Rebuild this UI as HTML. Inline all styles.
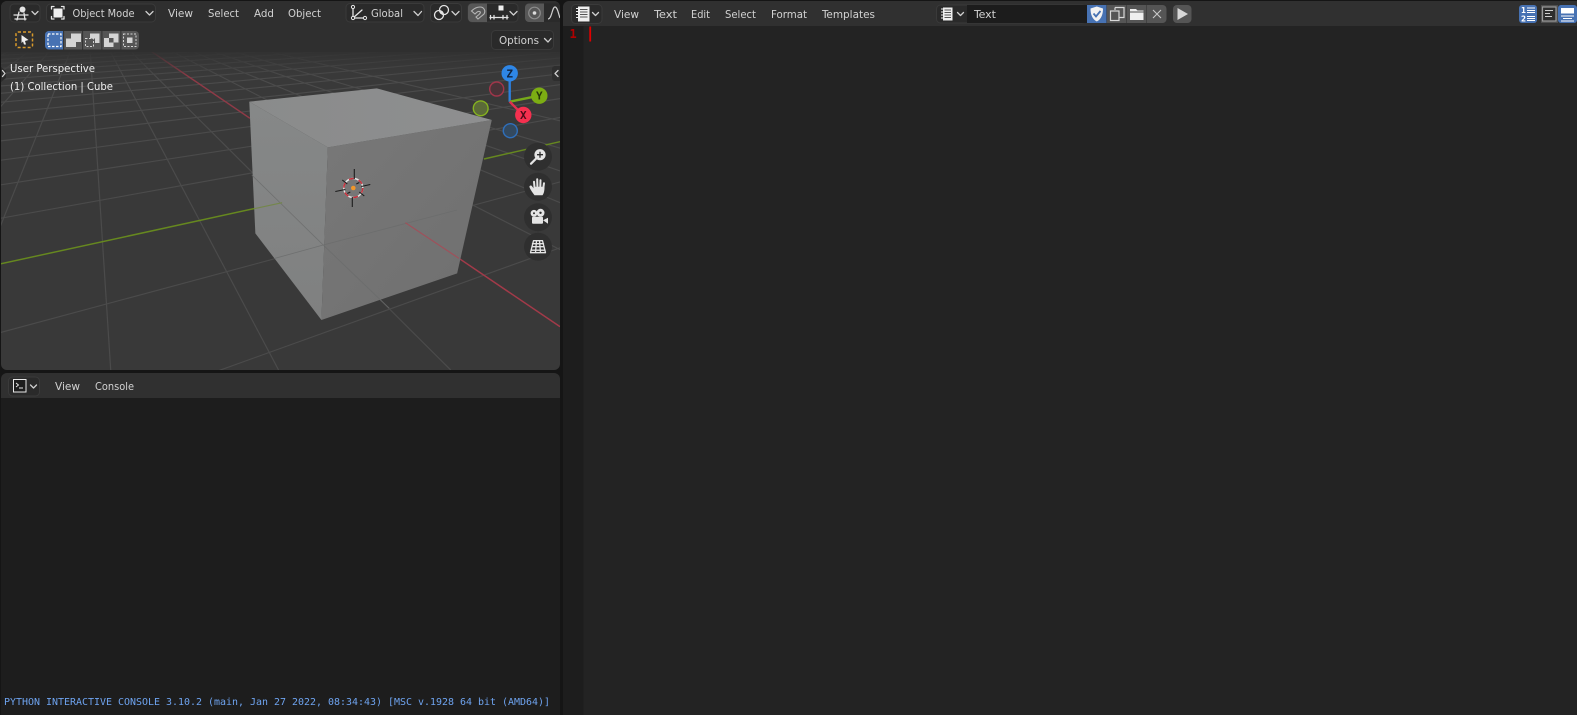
<!DOCTYPE html>
<html><head><meta charset="utf-8"><style>
html,body{margin:0;padding:0;background:#151515;width:1577px;height:715px;overflow:hidden}
svg{display:block}
text{font-family:"DejaVu Sans Condensed","DejaVu Sans","Liberation Sans",sans-serif;font-stretch:condensed;font-size:11px;fill:#d2d2d2}
.m{font-family:"DejaVu Sans Mono","Liberation Mono",monospace;font-stretch:normal}
.w{fill:#f0f0f0}
.c{fill:none;stroke:#cfcfcf;stroke-width:1.3;stroke-linecap:round;stroke-linejoin:round}
.i{fill:none;stroke:#e4e4e4;stroke-width:1.3;stroke-linecap:round;stroke-linejoin:round}
.d{fill:#2a2a2a;stroke:#3a3a3a;stroke-width:1}
</style></head><body>
<svg width="1577" height="715" viewBox="0 0 1577 715" xmlns="http://www.w3.org/2000/svg">
<defs>
<clipPath id="vp"><rect x="1" y="1" width="559" height="369" rx="6"/></clipPath>
<linearGradient id="fade" x1="0" y1="0" x2="0" y2="1"><stop offset="0" stop-color="#303030" stop-opacity="1"/><stop offset="1" stop-color="#393939" stop-opacity="0"/></linearGradient>
<linearGradient id="lf" x1="0" y1="0" x2="0" y2="1"><stop offset="0" stop-color="#868888"/><stop offset="1" stop-color="#7f8080"/></linearGradient>
<linearGradient id="rf" x1="0" y1="0" x2="1" y2="1"><stop offset="0" stop-color="#787878"/><stop offset="1" stop-color="#6f6f6f"/></linearGradient>
<linearGradient id="tf" x1="0" y1="0" x2="1" y2="0"><stop offset="0" stop-color="#8a8b8b"/><stop offset="1" stop-color="#8e8f90"/></linearGradient>
</defs>

<!-- 3D viewport -->
<g clip-path="url(#vp)">
<rect x="0" y="0" width="560" height="370" fill="#393939"/>
<g transform="translate(0 50) scale(.35714 .33333)">
<g stroke="#4b4b4b" stroke-width="3.4" fill="none">
<path d="M0 1198L3600 -190M0 848L3600 -190M0 505L3600 -190M0 405L3600 -190M0 331L3600 -190M0 273L3600 -190M0 227L3600 -190M0 189L3600 -190M0 157L3600 -190M0 130L3600 -190M0 108L3600 -190M0 88L3600 -190M0 70L3600 -190M0 55L3600 -190M0 40L3600 -190M0 28L3600 -190M0 16L3600 -190"/>
<path d="M245 -125L-1610 960M245 -125L-1130 960M245 -125L-650 960M245 -125L-160 960M245 -125L310 960M245 -125L780 960M245 -125L1262 960M245 -125L2228 960M245 -125L2708 960M245 -125L3188 960M245 -125L3668 960M245 -125L4500 960"/>
</g>
<path d="M425 5L700 205" stroke="#8f3a47" stroke-width="4.4" fill="none"/>
<path d="M0 642L715 475" stroke="#66881f" stroke-width="4.4" fill="none"/>
<path d="M1355 327L1568 275" stroke="#66881f" stroke-width="4.4" fill="none"/>
<path d="M1285 625L1568 830" stroke="#a23a49" stroke-width="4.4" fill="none"/>
<!-- cube -->
<polygon points="698,155 918,292 900,810 715,550" fill="url(#lf)"/>
<polygon points="918,292 1377,210 1280,670 900,810" fill="url(#rf)"/>
<polygon points="698,155 1055,115 1377,210 918,292" fill="url(#tf)"/>
<path d="M705 375L905 585L1090 775M770 625L905 585L1280 480" stroke="#6a6c6c" stroke-width="2.5" fill="none" opacity=".8"/>
<path d="M712 476L790 458" stroke="#74864c" stroke-width="3.5" fill="none"/>
<path d="M1135 518L1285 625" stroke="#a0505a" stroke-width="3.5" fill="none"/>
</g>
<rect x="0" y="50" width="560" height="28" fill="url(#fade)"/>
<!-- 3D cursor -->
<g transform="translate(353.3 188)">
<circle r="9.5" fill="none" stroke="#e8e8e8" stroke-width="1.4"/>
<circle r="9.5" fill="none" stroke="#c8303c" stroke-width="1.5" stroke-dasharray="5 5"/>
<g stroke="#1c1c1c" stroke-width="1.1"><path d="M1 -19V-9M-1 9V19M-18 3.5L-8 1.5M8 -1.5L17 -3.5M-11 -8L-6 -4M6 4L11 8M-6 5.5L-3 4M3 -4L6 -5.5"/></g>
<circle r="2.3" fill="#f0962a"/>
</g>
<!-- gizmo -->
<path d="M509.7 101.7V73" stroke="#2d7fdc" stroke-width="2.4"/>
<path d="M509.7 101.7L539 95.7" stroke="#76a81a" stroke-width="2.4"/>
<path d="M509.7 101.7L523 115" stroke="#e0314f" stroke-width="2.4"/>
<circle cx="496.7" cy="89" r="7" fill="#4a3338" stroke="#a3354a" stroke-width="1.4"/>
<circle cx="480.7" cy="108.3" r="7.4" fill="#5b6a38" stroke="#86b31f" stroke-width="1.4"/>
<circle cx="510.3" cy="130.7" r="7" fill="#33495f" stroke="#2f6fbb" stroke-width="1.4"/>
<circle cx="509.7" cy="73.3" r="8.2" fill="#2e86e6"/>
<circle cx="539.3" cy="95.7" r="8.2" fill="#7cad13"/>
<circle cx="523.3" cy="115" r="8.2" fill="#f5304f"/>
<text class="m" x="509.7" y="77.3" text-anchor="middle" style="font-size:11px;fill:#10233f;font-weight:bold">Z</text>
<text class="m" x="539.3" y="99.7" text-anchor="middle" style="font-size:11px;fill:#26360a;font-weight:bold">Y</text>
<text class="m" x="523.3" y="119" text-anchor="middle" style="font-size:11px;fill:#4a0b18;font-weight:bold">X</text>
<!-- nav buttons -->
<g fill="#2f2f2f">
<circle cx="538" cy="156.7" r="14"/><circle cx="538" cy="186.7" r="14"/><circle cx="538" cy="217.3" r="14"/><circle cx="538" cy="246.7" r="14"/>
</g>
<g transform="translate(538 156.7)">
<circle cx="2" cy="-2" r="5.6" fill="#e4e4e4"/>
<path d="M-2 2L-7 7" stroke="#e4e4e4" stroke-width="2.2" stroke-linecap="round"/>
<path d="M-1 -2H5M2 -5V1" stroke="#2c2c2c" stroke-width="1.3"/>
</g>
<g transform="translate(538 186.7)">
<path d="M-3 6.500L-4 -5M-0.500 3L-0.800 -7.500M2.200 3L2.500 -6.500M5 3.500L6 -3.500" stroke="#e4e4e4" stroke-width="2" stroke-linecap="round" fill="none"/>
<path d="M-3.500 8.500C-5.500 6 -7.500 3 -8.500 0.500C-9 -1 -7 -1.800 -6 -0.500L-4 2V0H6.500C6.500 4 6 6.500 4.500 8.500Z" fill="#e4e4e4"/>
</g>
<g transform="translate(538 217.3)" fill="#e4e4e4">
<circle cx="-4" cy="-4" r="3.4"/><circle cx="2.5" cy="-4.5" r="4"/>
<rect x="-6" y="-0.5" width="11" height="7" rx="1"/>
<path d="M5 3L10 0.5V6.5Z"/>
<circle cx="-4" cy="-4" r="1" fill="#2c2c2c"/><circle cx="2.5" cy="-4.5" r="1.2" fill="#2c2c2c"/>
</g>
<g transform="translate(538 246.7)">
<path class="i" stroke-width="1.1" d="M-4.5 -6H4.5L7.5 6H-7.5ZM-6 0H6M-7 3.5H7M-1.5 -6L-2.5 6M1.5 -6L2.5 6M-5.5 -3H5.500"/>
</g>
<!-- tabs -->
<path d="M1 67L6 71V78L1 82Z" fill="#2a2a2a"/><path d="M2.500 70.500L5 73.500L2.500 76.500" class="c" stroke-width="1"/>
<rect x="552" y="66" width="10" height="15" rx="3" fill="#2e2e2e"/><path d="M558 70.500L555 73.500L558 76.500" class="c"/>
<!-- overlay text -->
<text class="w" x="10" y="72" textLength="85" lengthAdjust="spacingAndGlyphs">User Perspective</text>
<text class="w" x="10" y="90" textLength="103" lengthAdjust="spacingAndGlyphs">(1) Collection | Cube</text>
<!-- header bg -->
<rect x="0" y="0" width="560" height="52" fill="#2f2f2f"/>
<!-- editor type -->
<rect class="d" x="10" y="4" width="30" height="18" rx="4"/>
<g transform="translate(14 6)"><path class="i" d="M0 9H14M1 13H12M5 6L3 14M10 7L11 14"/><circle cx="8.500" cy="3.500" r="3" fill="#e4e4e4"/></g>
<path class="c" d="M32 11.500L35 14.500L38 11.500"/>
<!-- mode -->
<rect class="d" x="46.500" y="4" width="109" height="18" rx="4"/>
<path class="i" d="M51.500 9V6.500H54M61.500 6.500H64V9M64 16.500V19H61.500M54 19H51.500V16.500"/>
<rect x="53.500" y="8.500" width="9" height="9" fill="#efefef"/>
<text x="72.500" y="17" textLength="62" lengthAdjust="spacingAndGlyphs">Object Mode</text>
<path class="c" d="M146 11.500L149.500 15L153 11.500"/>
<text x="168" y="17" textLength="25" lengthAdjust="spacingAndGlyphs">View</text><text x="208" y="17" textLength="31" lengthAdjust="spacingAndGlyphs">Select</text><text x="254" y="17" textLength="20" lengthAdjust="spacingAndGlyphs">Add</text><text x="288" y="17" textLength="33" lengthAdjust="spacingAndGlyphs">Object</text>
<!-- global -->
<rect class="d" x="346" y="3.500" width="78" height="18.500" rx="4"/>
<path class="i" d="M353 7V18H365M353 18L362 10"/>
<circle cx="353" cy="7" r="1.600" fill="#2a2a2a" stroke="#e4e4e4"/><circle cx="353" cy="18" r="1.600" fill="#2a2a2a" stroke="#e4e4e4"/><circle cx="365" cy="18" r="1.600" fill="#2a2a2a" stroke="#e4e4e4"/>
<text x="371" y="17" textLength="32" lengthAdjust="spacingAndGlyphs">Global</text>
<path class="c" d="M414 11.500L418 15.500L421.500 11.500"/>
<!-- link -->
<rect class="d" x="430.500" y="3.500" width="31" height="18.500" rx="4"/>
<circle cx="439" cy="15" r="4.500" class="i"/><circle cx="444" cy="10" r="4.500" class="i"/><circle cx="441.500" cy="12.500" r="1.500" fill="#e4e4e4"/>
<path class="c" d="M452 11.500L455.500 15L459 11.500"/>
<!-- snap -->
<rect class="d" x="468" y="3.500" width="50" height="18.500" rx="4"/>
<path d="M472 3.500H487V22H472A4 4 0 0 1 468 18V7.500A4 4 0 0 1 472 3.500Z" fill="#575757"/>
<path d="M478 19L484 14C486 11 484 7 480 7C477 7 474.500 8 471.500 11L475 14C477 12 478 11 479.500 11.500C481 12 480.500 13 479 14.500L476 17Z" fill="none" stroke="#b5b5b5" stroke-width="1.100"/>
<rect x="498.500" y="5.500" width="5" height="5" fill="#f0f0f0"/>
<path class="i" d="M490.500 15.500V19M494 15.500V19M503 15.500V19M507 15.500V19M490 17.500H508" stroke-width="1"/>
<path class="c" d="M510 11.500L513.500 15L517 11.500"/>
<!-- proportional -->
<path d="M529 3.500H544V22H529A4 4 0 0 1 525 18V7.500A4 4 0 0 1 529 3.500Z" fill="#575757"/>
<path d="M544 3.500H560V22H544Z" fill="#2a2a2a"/>
<circle cx="534.500" cy="13" r="5.800" fill="none" stroke="#8c8c8c" stroke-width="1.200"/><circle cx="534.500" cy="13" r="1.800" fill="#dcdcdc"/>
<path d="M548 19C552 19 552 7 555 7C557.500 7 558.500 14 560 18" fill="none" stroke="#cfcfcf" stroke-width="1.200"/>
<!-- tool row -->
<rect x="16" y="32" width="16.500" height="15.500" rx="2" fill="none" stroke="#d99a2b" stroke-width="1.500" stroke-dasharray="3 2"/>
<path d="M21.500 35L28.500 40L25 41L26 44.500L24 44.500L23 41.500L21.500 43Z" fill="#efefef"/>
<rect x="45" y="31" width="94" height="18.500" rx="4" fill="#555"/>
<path d="M49 31H63V49.500H49A4 4 0 0 1 45 45.500V35A4 4 0 0 1 49 31Z" fill="#4772b3"/>
<g fill="#262626"><rect x="63.300" y="31" width=".8" height="18.500"/><rect x="82.300" y="31" width=".8" height="18.500"/><rect x="101.500" y="31" width=".8" height="18.500"/><rect x="120.500" y="31" width=".8" height="18.500"/></g>
<rect x="48" y="34" width="13" height="12.500" fill="none" stroke="#fff" stroke-width="1.200" stroke-dasharray="2.500 1.500"/>
<path d="M66 38.500H71V33.500H81V42H76V47H66Z" fill="#d4d4d4"/>
<rect x="85.500" y="38.500" width="8" height="8" fill="none" stroke="#d4d4d4" stroke-dasharray="2 1.500"/><path d="M90 33.500H99.500V43H95V38.500H90Z" fill="#d4d4d4"/>
<path d="M104 38H109V33.500H118.500V42.500H113.500V47H104Z" fill="#d4d4d4"/><rect x="109" y="38" width="4.500" height="4.500" fill="#555"/>
<rect x="123.500" y="34" width="12.500" height="12.500" fill="none" stroke="#d4d4d4" stroke-dasharray="2 1.500"/><rect x="127" y="37.500" width="5.500" height="5.500" fill="#d4d4d4"/>
<!-- options -->
<rect class="d" x="491.500" y="30.500" width="62" height="19" rx="4"/>
<text x="499" y="44" textLength="40" lengthAdjust="spacingAndGlyphs">Options</text>
<path class="c" d="M544.500 38.500L548 42L551 38.500"/>
</g>

<!-- Console -->
<path d="M7 373H554A6 6 0 0 1 560 379V715H1V379A6 6 0 0 1 7 373Z" fill="#1d1d1d"/>
<path d="M7 373H554A6 6 0 0 1 560 379V398H1V379A6 6 0 0 1 7 373Z" fill="#303030"/>
<rect class="d" x="8.500" y="377" width="31" height="19" rx="4"/>
<rect x="13.500" y="379.500" width="12.500" height="12.500" fill="#1d1d1d" stroke="#e8e8e8" stroke-width="1"/>
<path d="M16 383L18.500 385L16 387M19 388H23" fill="none" stroke="#e8e8e8" stroke-width=".9"/>
<path class="c" d="M30.500 385L33.500 388L36.500 385"/>
<text x="55" y="390" textLength="25" lengthAdjust="spacingAndGlyphs">View</text><text x="95" y="390" textLength="39" lengthAdjust="spacingAndGlyphs">Console</text>
<text class="m" x="4" y="705" textLength="546" lengthAdjust="spacingAndGlyphs" style="font-size:10px;fill:#6ea3ef">PYTHON INTERACTIVE CONSOLE 3.10.2 (main, Jan 27 2022, 08:34:43) [MSC v.1928 64 bit (AMD64)]</text>

<!-- Text editor -->
<path d="M569 1H1577V715H563V7A6 6 0 0 1 569 1Z" fill="#232323"/>
<path d="M569 1H1577V26H563V7A6 6 0 0 1 569 1Z" fill="#303030"/>
<rect x="563" y="26" width="20.500" height="689" fill="#1d1d1d"/>
<rect x="589.300" y="26.500" width="1.800" height="15" fill="#e00000"/>
<text class="m" x="569.500" y="38" style="font-size:12px;fill:#b00000;font-weight:bold">1</text>
<rect class="d" x="571.500" y="4.500" width="30.500" height="19" rx="4"/>
<rect x="578" y="6.500" width="11.500" height="15" fill="#efefef"/><path d="M576 8.500H578M576 11.500H578M576 14.500H578M576 17.500H578" stroke="#efefef" stroke-width="1"/><path d="M580 9.500H587.500M580 12H587.500M580 14.500H587.500M580 17H587.500" stroke="#555" stroke-width="1"/>
<path class="c" d="M592.500 12.500L595.500 15.500L598.500 12.500"/>
<text x="614" y="18" textLength="25" lengthAdjust="spacingAndGlyphs">View</text><text x="654" y="18" textLength="23" lengthAdjust="spacingAndGlyphs">Text</text><text x="691" y="18" textLength="19" lengthAdjust="spacingAndGlyphs">Edit</text><text x="725" y="18" textLength="31" lengthAdjust="spacingAndGlyphs">Select</text><text x="771" y="18" textLength="36" lengthAdjust="spacingAndGlyphs">Format</text><text x="822" y="18" textLength="53" lengthAdjust="spacingAndGlyphs">Templates</text>
<!-- text datablock -->
<rect class="d" x="936.500" y="5" width="150" height="18" rx="4"/>
<rect x="967" y="5" width="120" height="18" fill="#1c1c1c"/>
<rect x="943" y="7.500" width="9.500" height="13" fill="#efefef"/><path d="M941 9H943M941 12H943M941 15H943M941 18H943" stroke="#efefef"/><path d="M944.500 10H951M944.500 12.500H951M944.500 15H951M944.500 17.500H951" stroke="#555"/>
<path class="c" d="M957.500 12.500L960.500 15.500L963.500 12.500"/>
<text x="974" y="18" textLength="22" lengthAdjust="spacingAndGlyphs">Text</text>
<rect x="1087" y="5" width="19.500" height="18" fill="#4772b3"/>
<path d="M1096.800 6.500L1103 8.500C1103 14 1101.500 19 1096.800 21.500C1092 19 1090.500 14 1090.500 8.500Z" fill="#f2f2f2"/>
<path d="M1093.500 13.500L1096 16.500L1100.500 11" fill="none" stroke="#4772b3" stroke-width="1.800"/>
<rect x="1107" y="5" width="19.500" height="18" fill="#555"/>
<path d="M1115 7.500H1124V17.500H1119.500M1115 7.500V10" fill="none" stroke="#d8d8d8" stroke-width="1.200"/><rect x="1110.500" y="11" width="8.500" height="9.500" fill="#555" stroke="#d8d8d8" stroke-width="1.200"/>
<rect x="1127" y="5" width="19.500" height="18" fill="#555"/>
<path d="M1130 9H1136L1137.500 10.500H1143.500V20H1130Z" fill="#efefef"/><path d="M1130 12H1143.500" stroke="#555"/>
<path d="M1151 5H1162.500A4 4 0 0 1 1166.500 9V19A4 4 0 0 1 1162.500 23H1147V5Z" fill="#555"/>
<path d="M1153 10L1161 18M1161 10L1153 18" stroke="#c8c8c8" stroke-width="1.100"/>
<rect x="1173" y="5" width="18.500" height="18" rx="4" fill="#555"/>
<path d="M1177.500 8L1188 14L1177.500 20Z" fill="#d8d8d8"/>
<!-- right toggles -->
<rect x="1519" y="5" width="18" height="18" rx="3" fill="#4772b3"/>
<text x="1521" y="13" style="font-size:8px;font-weight:bold;fill:#fff">1</text><text x="1521" y="21.500" style="font-size:8px;font-weight:bold;fill:#fff">2</text>
<path d="M1527 8H1535M1527 10.500H1535M1527 12.500H1535M1527 16.500H1535M1527 18.500H1535M1527 20.500H1535" stroke="#fff"/>
<rect x="1541" y="5" width="17" height="18" fill="#4f4f4f"/>
<rect x="1542.500" y="7" width="13.500" height="14" fill="#2e2e2e" stroke="#9a9a9a" stroke-width="1.200"/>
<path d="M1545 10.500H1553M1545 13.500H1550M1545 16.500H1552" stroke="#cfcfcf"/>
<rect x="1558" y="5" width="19" height="18" rx="3" fill="#4772b3"/>
<rect x="1561" y="8" width="13" height="5.500" fill="#fff"/>
<path d="M1561 16H1574M1563 18.500H1572M1561 21H1574" stroke="#fff"/>
</svg>
</body></html>
